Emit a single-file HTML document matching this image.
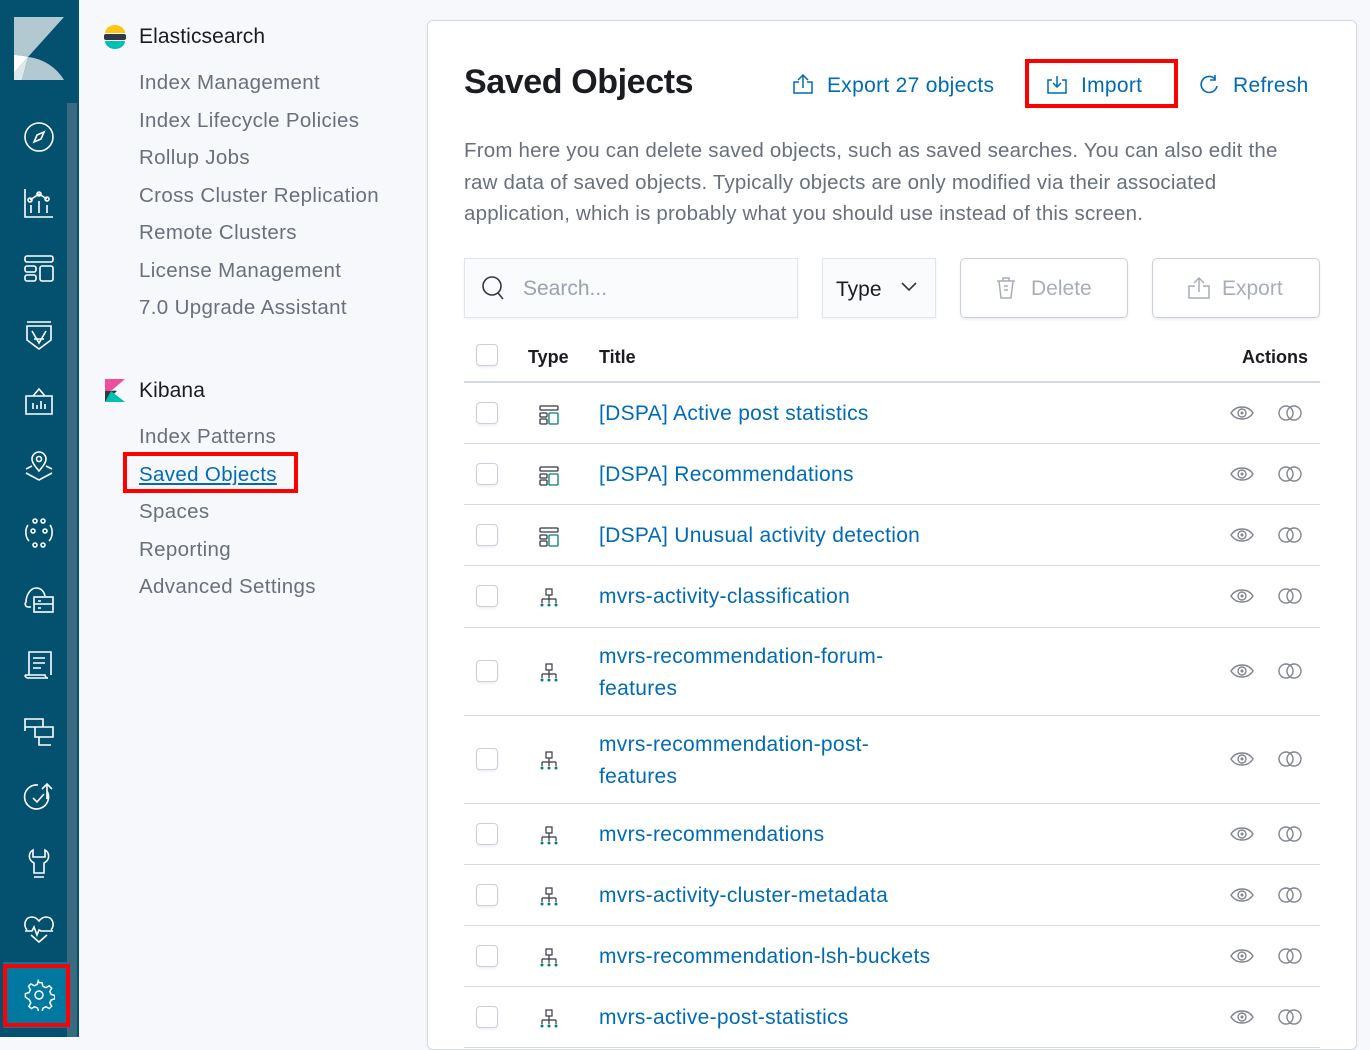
<!DOCTYPE html>
<html><head><meta charset="utf-8">
<style>
*{box-sizing:border-box;margin:0;padding:0}
body{width:1370px;height:1037px;overflow:hidden;background:#f7f8fc;font-family:"Liberation Sans",sans-serif;position:relative}
.side{position:absolute;left:0;top:0;width:79px;height:1037px;background:#03506f}
.scroll{position:absolute;left:67px;top:103px;width:10px;height:934px;background:#3a6a80}
.ic{position:absolute;left:23px;width:32px;height:32px}
.nav{position:absolute;left:139px;font-size:20.5px;color:#69707d;letter-spacing:.35px}
.hd{position:absolute;left:139px;font-size:21px;color:#1a1c21;font-weight:normal;letter-spacing:.1px}
.panel{position:absolute;left:427px;top:20px;width:930px;height:1030px;background:#fff;border:1px solid #d3dae6;border-radius:6px;box-shadow:0 1px 3px rgba(0,0,0,.05)}
.a{position:absolute;font-size:21px;color:#006bb4;letter-spacing:.3px}
.row{position:absolute;left:464px;width:856px;border-bottom:1px solid #d3dae6}
.cb{position:absolute;left:12px;width:22px;height:22px;border:1px solid #c9d0db;border-radius:4px;background:#fff;box-shadow:0 2px 2px rgba(0,0,0,.06)}
.t{position:absolute;left:135px;font-size:21px;color:#006bb4;letter-spacing:.3px;line-height:32px}
.ty{position:absolute;left:75px;width:20px;height:20px}
.eye{position:absolute;left:766px;width:24px;height:18px}
.lk{position:absolute;left:814px;width:24px;height:18px}
</style></head><body>
<div class="side">
<svg style="position:absolute;left:14px;top:17px" width="50" height="63" viewBox="0 0 50 63"><path d="M0 0H50L14 40A40 40 0 0 0 0 38Z" fill="#b3c9d2"/><path d="M0 38A48 48 0 0 1 14 40L0 56Z" fill="#fff"/><path d="M14 40A48 48 0 0 1 50 63H8Z" fill="#b3c9d2"/><path d="M14 40L0 56V63H8Z" fill="#dce8ec"/></svg>
<div class="scroll"></div>
<div style="position:absolute;left:3px;top:962px;width:64px;height:66px;background:#00789f"></div>
<div style="position:absolute;left:3px;top:964px;width:67px;height:63px;border:4px solid #f00"></div>
<svg class="ic" style="top:121px" viewBox="0 0 32 32" fill="none" stroke="#fff" stroke-width="1.6"><circle cx="16" cy="16" r="14"/><path d="M21 11l-3 7-7 3 3-7z"/></svg>
<svg class="ic" style="top:187px" viewBox="0 0 32 32" fill="none" stroke="#fff" stroke-width="1.6"><path d="M2 2V30H30M8 26V18M16 26V14M24 26V18M7 13l9-6 8 5"/><circle cx="7" cy="13" r="2"/><circle cx="16" cy="7" r="2"/><circle cx="24" cy="12" r="2"/></svg>
<svg class="ic" style="top:253px" viewBox="0 0 32 32" fill="none" stroke="#fff" stroke-width="1.6"><rect x="2" y="3" width="28" height="6" rx="2"/><rect x="2" y="13" width="11" height="6" rx="2"/><rect x="2" y="22" width="11" height="6" rx="2"/><rect x="17" y="13" width="13" height="15" rx="2"/></svg>
<svg class="ic" style="top:319px" viewBox="0 0 32 32" fill="none" stroke="#fff" stroke-width="1.6"><path d="M4 3H28M4 7H28V21L16 30 4 21Z M9 12l7 12 7-12M11 20h10"/></svg>
<svg class="ic" style="top:385px" viewBox="0 0 32 32" fill="none" stroke="#fff" stroke-width="1.6"><path d="M3 11H29V29H3Z M10 11l6-7 6 7M10 24v-6M14 24v-4M18 24v-8M22 24v-5"/></svg>
<svg class="ic" style="top:451px" viewBox="0 0 32 32" fill="none" stroke="#fff" stroke-width="1.6"><path d="M16 20c-5-6-7-9-7-12a7 7 0 0 1 14 0c0 3-2 6-7 12z M3 22l13 7 13-7M3 18l6-3M29 18l-6-3"/><circle cx="16" cy="8" r="2.5"/></svg>
<svg class="ic" style="top:517px" viewBox="0 0 32 32" fill="none" stroke="#fff" stroke-width="1.6"><circle cx="12" cy="4" r="2"/><circle cx="20" cy="4" r="2"/><circle cx="10" cy="14" r="2"/><circle cx="22" cy="14" r="2"/><circle cx="12" cy="28" r="2"/><circle cx="20" cy="28" r="2"/><path d="M5 8C2 12 2 20 6 24M27 8c3 4 3 12-1 16"/></svg>
<svg class="ic" style="top:583px" viewBox="0 0 32 32" fill="none" stroke="#fff" stroke-width="1.6"><path d="M8 24H5a3 3 0 0 1-2-5c0-6 4-14 10-14s8 4 9 8"/><rect x="11" y="14" width="19" height="15"/><path d="M11 21H30M15 18h3M15 25h3"/></svg>
<svg class="ic" style="top:649px" viewBox="0 0 32 32" fill="none" stroke="#fff" stroke-width="1.6"><path d="M6 26V3H28V26M2 26H22a3 3 0 0 0 3 3H5a3 3 0 0 1-3-3M10 9h12M10 14h12M10 19h8"/></svg>
<svg class="ic" style="top:715px" viewBox="0 0 32 32" fill="none" stroke="#fff" stroke-width="1.6"><path d="M2 4H20V12H2ZM2 12V16M12 12H30V22H12ZM16 22V30H28"/></svg>
<svg class="ic" style="top:781px" viewBox="0 0 32 32" fill="none" stroke="#fff" stroke-width="1.6"><path d="M24 10a12 12 0 1 1-9-6M24 4v14M19 8l5-5 5 5M10 17l4 4 7-8"/></svg>
<svg class="ic" style="top:847px" viewBox="0 0 32 32" fill="none" stroke="#fff" stroke-width="1.6"><path d="M10 3C5 6 5 13 11 16V26H21V16C27 13 27 6 22 3V10H10Z M11 30H21"/></svg>
<svg class="ic" style="top:913px" viewBox="0 0 32 32" fill="none" stroke="#fff" stroke-width="1.6"><path d="M4 17C0 12 2 4 9 4c4 0 6 3 7 4 1-1 3-4 7-4 7 0 9 8 5 13M2 18h7l2-4 3 8 2-5 2 1h12M8 22l8 7 8-7"/></svg>
<svg class="ic" style="top:979px" viewBox="0 0 32 32" fill="none" stroke="#fff" stroke-width="1.5"><circle cx="16" cy="16" r="4"/><path d="M16 3.5l3 .2 1 3.6 3 1.4 3.3-1.9 2.4 2.4-1.9 3.3 1.4 3 3.6 1v3.4l-3.6 1-1.4 3 1.9 3.3-2.4 2.4-3.3-1.9-3 1.4-1 3.6h-3.4l-1-3.6-3-1.4-3.3 1.9-2.4-2.4 1.9-3.3-1.4-3L2.4 18v-3.4l3.6-1 1.4-3-1.9-3.3 2.4-2.4 3.3 1.9 3-1.4 1-3.6z"/></svg>
</div>

<svg style="position:absolute;left:104px;top:25px" width="22" height="24" viewBox="0 0 22 24"><path d="M1 8A10 8 0 0 1 21 8Z" fill="#fec514"/><rect x="0" y="9" width="22" height="6" rx="2" fill="#343741"/><path d="M1 16H21A10 8 0 0 1 1 16Z" fill="#00bfb3"/></svg>
<div class="hd" style="top:25px">Elasticsearch</div>
<div class="nav" style="top:71px">Index Management</div>
<div class="nav" style="top:109px">Index Lifecycle Policies</div>
<div class="nav" style="top:146px">Rollup Jobs</div>
<div class="nav" style="top:184px">Cross Cluster Replication</div>
<div class="nav" style="top:221px">Remote Clusters</div>
<div class="nav" style="top:259px">License Management</div>
<div class="nav" style="top:296px">7.0 Upgrade Assistant</div>
<svg style="position:absolute;left:105px;top:379px" width="20" height="23" viewBox="0 0 20 23"><path d="M0 0H20L6 12 0 12Z" fill="#f04e98"/><path d="M0 12H6A14 14 0 0 1 12 12L0 23Z" fill="#343741"/><path d="M6 12L20 23H0Z" fill="#00bfb3"/></svg>
<div class="hd" style="top:379px">Kibana</div>
<div class="nav" style="top:425px">Index Patterns</div>
<div class="nav" style="top:463px;color:#006bb4;text-decoration:underline">Saved Objects</div>
<div style="position:absolute;left:123px;top:452px;width:175px;height:41px;border:4px solid #f00"></div>
<div class="nav" style="top:500px">Spaces</div>
<div class="nav" style="top:538px">Reporting</div>
<div class="nav" style="top:575px">Advanced Settings</div>

<div class="panel"></div>
<div style="position:absolute;left:464px;top:63px;font-size:34px;font-weight:bold;color:#1a1c21;letter-spacing:-.4px">Saved Objects</div>
<svg style="position:absolute;left:792px;top:73px" width="22" height="22" viewBox="0 0 22 22" fill="none" stroke="#006bb4" stroke-width="1.5"><path d="M7 9H2v11h18V9h-5M11 15V2M6 7l5-5 5 5"/></svg>
<div class="a" style="left:827px;top:74px">Export 27 objects</div>
<svg style="position:absolute;left:1046px;top:75px" width="22" height="20" viewBox="0 0 22 20" fill="none" stroke="#006bb4" stroke-width="1.5"><path d="M6 5H2v13h18V5h-4M11 1v11M7 8l4 4 4-4"/></svg>
<div class="a" style="left:1081px;top:74px">Import</div>
<div style="position:absolute;left:1025px;top:59px;width:153px;height:49px;border:4px solid #f00"></div>
<svg style="position:absolute;left:1198px;top:74px" width="22" height="22" viewBox="0 0 22 22" fill="none" stroke="#006bb4" stroke-width="1.6"><path d="M17 5A8 8 0 1 0 19 12M17 1v5h-5"/></svg>
<div class="a" style="left:1233px;top:74px">Refresh</div>

<div style="position:absolute;left:464px;top:135px;width:820px;font-size:20.5px;line-height:31.6px;color:#69707d;letter-spacing:.2px">From here you can delete saved objects, such as saved searches. You can also edit the raw data of saved objects. Typically objects are only modified via their associated application, which is probably what you should use instead of this screen.</div>

<div style="position:absolute;left:464px;top:258px;width:334px;height:60px;background:#fafbfd;border:1px solid #e0e5ee;box-shadow:0 1px 2px rgba(0,0,0,.06)"></div>
<svg style="position:absolute;left:481px;top:275px" width="26" height="26" viewBox="0 0 26 26" fill="none" stroke="#343741" stroke-width="1.6"><circle cx="11" cy="11" r="9"/><path d="M17 18l5 6"/></svg>
<div style="position:absolute;left:523px;top:277px;font-size:21px;color:#98a2b3">Search...</div>
<div style="position:absolute;left:822px;top:258px;width:114px;height:60px;background:#fafbfd;border:1px solid #e0e5ee;box-shadow:0 1px 2px rgba(0,0,0,.06)"></div>
<div style="position:absolute;left:836px;top:278px;font-size:21px;color:#1a1c21">Type</div>
<svg style="position:absolute;left:900px;top:281px" width="18" height="12" viewBox="0 0 18 12" fill="none" stroke="#343741" stroke-width="1.6"><path d="M2 2l7 7 7-7"/></svg>
<div style="position:absolute;left:960px;top:258px;width:168px;height:60px;border:1px solid #c9d0db;border-radius:5px;box-shadow:0 2px 2px rgba(0,0,0,.06)"></div>
<svg style="position:absolute;left:995px;top:276px" width="22" height="24" viewBox="0 0 22 24" fill="none" stroke="#a7aeb9" stroke-width="1.5"><path d="M2 5H20M8 5V2h6v3M4 5l2 17h10l2-17M9 10h4M9 14h4"/></svg>
<div style="position:absolute;left:1031px;top:277px;font-size:21px;color:#a7aeb9">Delete</div>
<div style="position:absolute;left:1152px;top:258px;width:168px;height:60px;border:1px solid #c9d0db;border-radius:5px;box-shadow:0 2px 2px rgba(0,0,0,.06)"></div>
<svg style="position:absolute;left:1187px;top:276px" width="24" height="24" viewBox="0 0 24 24" fill="none" stroke="#a7aeb9" stroke-width="1.5"><path d="M8 10H2v12h20V10h-6M12 16V2M7 7l5-5 5 5"/></svg>
<div style="position:absolute;left:1222px;top:277px;font-size:21px;color:#a7aeb9">Export</div>

<div class="row" style="top:338px;height:45px;border-bottom:2px solid #d3dae6">
<div class="cb" style="top:6px"></div>
<div style="position:absolute;left:64px;top:9px;font-size:18px;font-weight:bold;color:#1a1c21">Type</div>
<div style="position:absolute;left:135px;top:9px;font-size:18px;font-weight:bold;color:#1a1c21">Title</div>
<div style="position:absolute;right:12px;top:9px;font-size:18px;font-weight:bold;color:#1a1c21">Actions</div>
</div>

<div class="row" style="top:383px;height:61px"><div class="cb" style="top:19px"></div>
<svg class="ty" style="top:22px" viewBox="0 0 20 20" fill="none" stroke-width="1.3"><rect x="1" y="1" width="18" height="4" rx="1" stroke="#343741"/><rect x="1" y="8" width="7" height="4" rx="1" stroke="#343741"/><rect x="1" y="14" width="7" height="5" rx="1" stroke="#343741"/><rect x="10" y="8" width="9" height="11" rx="1" stroke="#017d73"/></svg>
<div class="t" style="top:15px">[DSPA] Active post statistics</div>
<svg class="eye" style="top:21px" viewBox="0 0 24 18" fill="none" stroke="#808590" stroke-width="1.4"><path d="M1 9C6 1 18 1 23 9 18 17 6 17 1 9Z"/><circle cx="12" cy="9" r="4"/><circle cx="12" cy="9" r=".8"/></svg>
<svg class="lk" style="top:21px" viewBox="0 0 24 18" fill="none" stroke="#808590" stroke-width="1.4"><circle cx="8" cy="9" r="7"/><circle cx="16" cy="9" r="7"/></svg></div>

<div class="row" style="top:444px;height:61px"><div class="cb" style="top:19px"></div>
<svg class="ty" style="top:22px" viewBox="0 0 20 20" fill="none" stroke-width="1.3"><rect x="1" y="1" width="18" height="4" rx="1" stroke="#343741"/><rect x="1" y="8" width="7" height="4" rx="1" stroke="#343741"/><rect x="1" y="14" width="7" height="5" rx="1" stroke="#343741"/><rect x="10" y="8" width="9" height="11" rx="1" stroke="#017d73"/></svg>
<div class="t" style="top:15px">[DSPA] Recommendations</div>
<svg class="eye" style="top:21px" viewBox="0 0 24 18" fill="none" stroke="#808590" stroke-width="1.4"><path d="M1 9C6 1 18 1 23 9 18 17 6 17 1 9Z"/><circle cx="12" cy="9" r="4"/><circle cx="12" cy="9" r=".8"/></svg>
<svg class="lk" style="top:21px" viewBox="0 0 24 18" fill="none" stroke="#808590" stroke-width="1.4"><circle cx="8" cy="9" r="7"/><circle cx="16" cy="9" r="7"/></svg></div>

<div class="row" style="top:505px;height:61px"><div class="cb" style="top:19px"></div>
<svg class="ty" style="top:22px" viewBox="0 0 20 20" fill="none" stroke-width="1.3"><rect x="1" y="1" width="18" height="4" rx="1" stroke="#343741"/><rect x="1" y="8" width="7" height="4" rx="1" stroke="#343741"/><rect x="1" y="14" width="7" height="5" rx="1" stroke="#343741"/><rect x="10" y="8" width="9" height="11" rx="1" stroke="#017d73"/></svg>
<div class="t" style="top:15px">[DSPA] Unusual activity detection</div>
<svg class="eye" style="top:21px" viewBox="0 0 24 18" fill="none" stroke="#808590" stroke-width="1.4"><path d="M1 9C6 1 18 1 23 9 18 17 6 17 1 9Z"/><circle cx="12" cy="9" r="4"/><circle cx="12" cy="9" r=".8"/></svg>
<svg class="lk" style="top:21px" viewBox="0 0 24 18" fill="none" stroke="#808590" stroke-width="1.4"><circle cx="8" cy="9" r="7"/><circle cx="16" cy="9" r="7"/></svg></div>

<div class="row" style="top:566px;height:62px"><div class="cb" style="top:19px"></div>
<svg class="ty" style="top:22px" viewBox="0 0 20 20" fill="none" stroke-width="1.2"><rect x="7" y="1" width="6" height="6" stroke="#343741"/><path d="M10 7v4M3 11h14M3 11v4M10 11v4M17 11v4" stroke="#343741"/><circle cx="3" cy="17" r="1.5" fill="#017d73" stroke="none"/><circle cx="10" cy="17" r="1.5" fill="#017d73" stroke="none"/><circle cx="17" cy="17" r="1.5" fill="#017d73" stroke="none"/></svg>
<div class="t" style="top:15px">mvrs-activity-classification</div>
<svg class="eye" style="top:21px" viewBox="0 0 24 18" fill="none" stroke="#808590" stroke-width="1.4"><path d="M1 9C6 1 18 1 23 9 18 17 6 17 1 9Z"/><circle cx="12" cy="9" r="4"/><circle cx="12" cy="9" r=".8"/></svg>
<svg class="lk" style="top:21px" viewBox="0 0 24 18" fill="none" stroke="#808590" stroke-width="1.4"><circle cx="8" cy="9" r="7"/><circle cx="16" cy="9" r="7"/></svg></div>

<div class="row" style="top:628px;height:88px"><div class="cb" style="top:32px"></div>
<svg class="ty" style="top:35px" viewBox="0 0 20 20" fill="none" stroke-width="1.2"><rect x="7" y="1" width="6" height="6" stroke="#343741"/><path d="M10 7v4M3 11h14M3 11v4M10 11v4M17 11v4" stroke="#343741"/><circle cx="3" cy="17" r="1.5" fill="#017d73" stroke="none"/><circle cx="10" cy="17" r="1.5" fill="#017d73" stroke="none"/><circle cx="17" cy="17" r="1.5" fill="#017d73" stroke="none"/></svg>
<div class="t" style="top:13px">mvrs-recommendation-forum-<br>features</div>
<svg class="eye" style="top:34px" viewBox="0 0 24 18" fill="none" stroke="#808590" stroke-width="1.4"><path d="M1 9C6 1 18 1 23 9 18 17 6 17 1 9Z"/><circle cx="12" cy="9" r="4"/><circle cx="12" cy="9" r=".8"/></svg>
<svg class="lk" style="top:34px" viewBox="0 0 24 18" fill="none" stroke="#808590" stroke-width="1.4"><circle cx="8" cy="9" r="7"/><circle cx="16" cy="9" r="7"/></svg></div>

<div class="row" style="top:716px;height:88px"><div class="cb" style="top:32px"></div>
<svg class="ty" style="top:35px" viewBox="0 0 20 20" fill="none" stroke-width="1.2"><rect x="7" y="1" width="6" height="6" stroke="#343741"/><path d="M10 7v4M3 11h14M3 11v4M10 11v4M17 11v4" stroke="#343741"/><circle cx="3" cy="17" r="1.5" fill="#017d73" stroke="none"/><circle cx="10" cy="17" r="1.5" fill="#017d73" stroke="none"/><circle cx="17" cy="17" r="1.5" fill="#017d73" stroke="none"/></svg>
<div class="t" style="top:13px">mvrs-recommendation-post-<br>features</div>
<svg class="eye" style="top:34px" viewBox="0 0 24 18" fill="none" stroke="#808590" stroke-width="1.4"><path d="M1 9C6 1 18 1 23 9 18 17 6 17 1 9Z"/><circle cx="12" cy="9" r="4"/><circle cx="12" cy="9" r=".8"/></svg>
<svg class="lk" style="top:34px" viewBox="0 0 24 18" fill="none" stroke="#808590" stroke-width="1.4"><circle cx="8" cy="9" r="7"/><circle cx="16" cy="9" r="7"/></svg></div>

<div class="row" style="top:804px;height:61px"><div class="cb" style="top:19px"></div>
<svg class="ty" style="top:22px" viewBox="0 0 20 20" fill="none" stroke-width="1.2"><rect x="7" y="1" width="6" height="6" stroke="#343741"/><path d="M10 7v4M3 11h14M3 11v4M10 11v4M17 11v4" stroke="#343741"/><circle cx="3" cy="17" r="1.5" fill="#017d73" stroke="none"/><circle cx="10" cy="17" r="1.5" fill="#017d73" stroke="none"/><circle cx="17" cy="17" r="1.5" fill="#017d73" stroke="none"/></svg>
<div class="t" style="top:15px">mvrs-recommendations</div>
<svg class="eye" style="top:21px" viewBox="0 0 24 18" fill="none" stroke="#808590" stroke-width="1.4"><path d="M1 9C6 1 18 1 23 9 18 17 6 17 1 9Z"/><circle cx="12" cy="9" r="4"/><circle cx="12" cy="9" r=".8"/></svg>
<svg class="lk" style="top:21px" viewBox="0 0 24 18" fill="none" stroke="#808590" stroke-width="1.4"><circle cx="8" cy="9" r="7"/><circle cx="16" cy="9" r="7"/></svg></div>

<div class="row" style="top:865px;height:61px"><div class="cb" style="top:19px"></div>
<svg class="ty" style="top:22px" viewBox="0 0 20 20" fill="none" stroke-width="1.2"><rect x="7" y="1" width="6" height="6" stroke="#343741"/><path d="M10 7v4M3 11h14M3 11v4M10 11v4M17 11v4" stroke="#343741"/><circle cx="3" cy="17" r="1.5" fill="#017d73" stroke="none"/><circle cx="10" cy="17" r="1.5" fill="#017d73" stroke="none"/><circle cx="17" cy="17" r="1.5" fill="#017d73" stroke="none"/></svg>
<div class="t" style="top:15px">mvrs-activity-cluster-metadata</div>
<svg class="eye" style="top:21px" viewBox="0 0 24 18" fill="none" stroke="#808590" stroke-width="1.4"><path d="M1 9C6 1 18 1 23 9 18 17 6 17 1 9Z"/><circle cx="12" cy="9" r="4"/><circle cx="12" cy="9" r=".8"/></svg>
<svg class="lk" style="top:21px" viewBox="0 0 24 18" fill="none" stroke="#808590" stroke-width="1.4"><circle cx="8" cy="9" r="7"/><circle cx="16" cy="9" r="7"/></svg></div>

<div class="row" style="top:926px;height:61px"><div class="cb" style="top:19px"></div>
<svg class="ty" style="top:22px" viewBox="0 0 20 20" fill="none" stroke-width="1.2"><rect x="7" y="1" width="6" height="6" stroke="#343741"/><path d="M10 7v4M3 11h14M3 11v4M10 11v4M17 11v4" stroke="#343741"/><circle cx="3" cy="17" r="1.5" fill="#017d73" stroke="none"/><circle cx="10" cy="17" r="1.5" fill="#017d73" stroke="none"/><circle cx="17" cy="17" r="1.5" fill="#017d73" stroke="none"/></svg>
<div class="t" style="top:15px">mvrs-recommendation-lsh-buckets</div>
<svg class="eye" style="top:21px" viewBox="0 0 24 18" fill="none" stroke="#808590" stroke-width="1.4"><path d="M1 9C6 1 18 1 23 9 18 17 6 17 1 9Z"/><circle cx="12" cy="9" r="4"/><circle cx="12" cy="9" r=".8"/></svg>
<svg class="lk" style="top:21px" viewBox="0 0 24 18" fill="none" stroke="#808590" stroke-width="1.4"><circle cx="8" cy="9" r="7"/><circle cx="16" cy="9" r="7"/></svg></div>

<div class="row" style="top:987px;height:61px"><div class="cb" style="top:19px"></div>
<svg class="ty" style="top:22px" viewBox="0 0 20 20" fill="none" stroke-width="1.2"><rect x="7" y="1" width="6" height="6" stroke="#343741"/><path d="M10 7v4M3 11h14M3 11v4M10 11v4M17 11v4" stroke="#343741"/><circle cx="3" cy="17" r="1.5" fill="#017d73" stroke="none"/><circle cx="10" cy="17" r="1.5" fill="#017d73" stroke="none"/><circle cx="17" cy="17" r="1.5" fill="#017d73" stroke="none"/></svg>
<div class="t" style="top:15px">mvrs-active-post-statistics</div>
<svg class="eye" style="top:21px" viewBox="0 0 24 18" fill="none" stroke="#808590" stroke-width="1.4"><path d="M1 9C6 1 18 1 23 9 18 17 6 17 1 9Z"/><circle cx="12" cy="9" r="4"/><circle cx="12" cy="9" r=".8"/></svg>
<svg class="lk" style="top:21px" viewBox="0 0 24 18" fill="none" stroke="#808590" stroke-width="1.4"><circle cx="8" cy="9" r="7"/><circle cx="16" cy="9" r="7"/></svg></div>
</body></html>
